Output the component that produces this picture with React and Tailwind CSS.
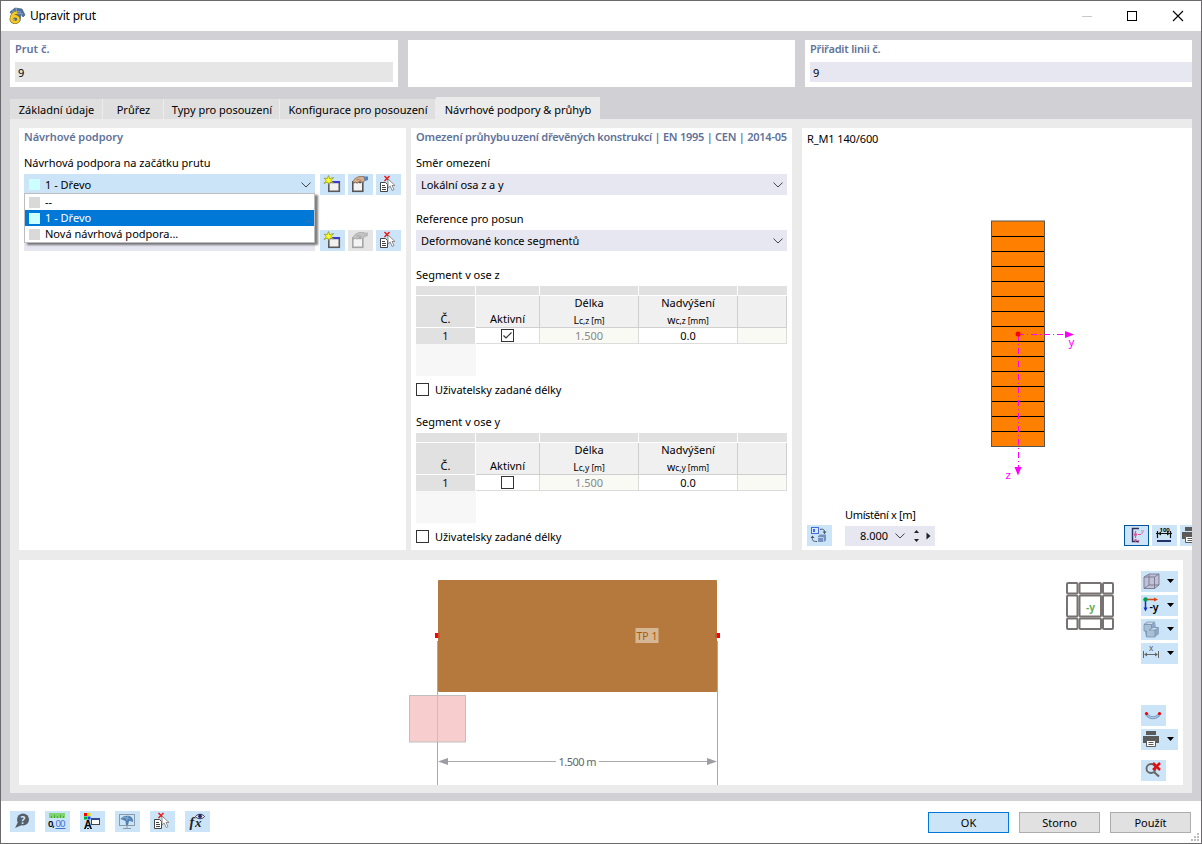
import { Fragment } from "react";

const segments = [
  { axis: "z", checked: true },
  { axis: "y", checked: false },
];

const supportOptions = [
  { text: "--", color: "bg-[#d9d9d9]" },
  { text: "1 - Dřevo", color: "bg-[#ccffff]", selected: true },
  { text: "Nová návrhová podpora...", color: "bg-[#d9d9d9]" },
];

const tabs = [
  { text: "Základní údaje", width: "w-[93px]" },
  { text: "Průřez", width: "w-[61px]" },
  { text: "Typy pro posouzení", width: "w-[116px]" },
  { text: "Konfigurace pro posouzení", width: "w-[156px]" },
];

const Icon = ({ children, w = 25 }) => (
  <svg width={w} height="21" viewBox={`0 0 ${w} 21`} className="block shrink-0">{children}</svg>
);

const ToolButton = ({ children, className = "", drop }) => (
  <button className={`flex h-[21px] shrink-0 items-center overflow-hidden ${drop ? "w-[37px]" : "w-[25px]"} ${className || "bg-[#cce4f7]"}`}>
    <Icon w={drop ? 37 : 25}>
      {children}
      {drop && <path d="M26 8h7l-3.5 4z" fill="#000" />}
    </Icon>
  </button>
);

const Chevron = () => (
  <svg width="10" height="6" viewBox="0 0 10 6" className="block">
    <path d="M.5.6 5 5 9.5.6" fill="none" stroke="#444" />
  </svg>
);

const NewIcon = () => (
  <>
    <rect x="8.800" y="7.800" width="10.500" height="9.500" fill="#f0f0f0" stroke="#5a5a5a" strokeWidth="1.600" />
    <path d="M10 7h10v2.200H10z" fill="#3b3bc8" />
    <path d="M8.500 1.500l1.200 3.200 4-1.200-2.600 2.900 2.400 2.500-3.500-.7-.8 2.800-1.500-3-3.700 1.500 2.300-3-2.200-2.400 3.300.4z" fill="#ffff20" stroke="#8a8a30" strokeWidth=".7" />
  </>
);

const EditIcon = ({ off }) => (
  <>
    <rect x="4.800" y="7.800" width="10" height="9.500" fill="#f4f4f4" stroke={off ? "#a5a5a5" : "#555"} strokeWidth="1.600" />
    <path d="M5 8.500h9" stroke={off ? "#aaa" : "#555"} strokeWidth="1.500" strokeDasharray="2 1" />
    <path d="M5 7.500l2-3 4-2h5l1 4-3 2-2-1-3 1.500-1.500-1-2 1z" fill={off ? "#c4c4c4" : "#d9b08d"} stroke={off ? "#aaa" : "#8b6b55"} strokeWidth=".8" />
    <path d="M8.500 6l3-1M10.500 7.500l3-1.500" stroke={off ? "#999" : "#8b6b55"} strokeWidth=".7" />
    <path d="M15.500 2.500h4.500V6l-3 1z" fill={off ? "#bbb" : "#5784bd"} />
  </>
);

const PickIcon = () => (
  <>
    <path d="M4.500 8.500h5l2 2v7h-7z" fill="#fff" stroke="#444" />
    <path d="M6 11.500h3M6 13.500h4M6 15.500h4" stroke="#444" />
    <path d="M8.500 2l5 5M13.500 2l-5 5" stroke="#f01818" strokeWidth="1.500" />
    <path d="M12 5v9l2.200-2 2 4.500 1.800-.9-2-4.100h3z" fill="#fff" stroke="#777" strokeWidth=".8" />
  </>
);

const PrinterIcon = () => (
  <>
    <path d="M5 2h10v4H5zM2 7h16v7h-3v-2.500H5V14H2z" fill="#5a5a5a" />
    <path d="M5.500 11.500h9v6h-9z" fill="#fff" stroke="#5a5a5a" />
    <path d="M7.500 13.500h5M7.500 15.500h5" stroke="#5a5a5a" />
  </>
);

const SupportRow = ({ off, children }) => (
  <div className="flex h-[21px] gap-[3px]">
    <div className="mr-[2px] w-[291px]">{children}</div>
    <ToolButton><NewIcon /></ToolButton>
    <ToolButton className={off ? "bg-[#e5e5e5]" : ""}><EditIcon off={off} /></ToolButton>
    <ToolButton><PickIcon /></ToolButton>
  </div>
);

const Select = ({ label, value }) => (
  <div className="mb-[16px]">
    <div className="h-[19px] leading-[16px]">{label}</div>
    <div className="flex h-[21px] items-center justify-between bg-[#e7e7f1] pr-[4px] pl-[5px]">
      <span className="tracking-[-0.05px]">{value}</span>
      <Chevron />
    </div>
  </div>
);

const Check = ({ checked }) => (
  <svg width="13" height="13" viewBox="0 0 13 13" className="block shrink-0">
    <rect x=".5" y=".5" width="12" height="12" fill="#fff" stroke="#333" />
    {checked && <path d="M2.500 6.500 5 9 10.500 3.500" fill="none" stroke="#333" strokeWidth="1.200" />}
  </svg>
);

const SegmentTable = ({ axis, checked }) => (
  <div className="h-[147px]">
    <div className="h-[19px] leading-[16px]">Segment v ose {axis}</div>
    <div className="grid h-[58px] grid-cols-[60px_64px_99px_99px_49px] grid-rows-[10px_32px_16px] text-center">
      {[0, 1, 2, 3, 4].map((i) => (
        <div key={i} className={`border-b border-white bg-[#e1e1e1] ${i < 4 ? "border-r" : ""}`} />
      ))}
      <div className="flex items-end justify-center border-r border-b border-white bg-[#e1e1e1] leading-[16px]">Č.</div>
      <div className="flex items-end justify-center border-r border-b border-[#cfcfcf] bg-[#f0f0f0] leading-[16px]">Aktivní</div>
      <div className="border-r border-b border-[#cfcfcf] bg-[#f0f0f0] leading-[14px]">
        <div>Délka</div>
        <div className="pt-[3px] text-[10.5px] leading-[14px]">L<span className="text-[8.5px] tracking-[-0.1px]">c,{axis} [m]</span></div>
      </div>
      <div className="border-r border-b border-[#cfcfcf] bg-[#f0f0f0] leading-[14px]">
        <div>Nadvýšení</div>
        <div className="pt-[3px] text-[10.5px] leading-[14px]">w<span className="text-[8.5px] tracking-[-0.1px]">c,{axis} [mm]</span></div>
      </div>
      <div className="border-r border-b border-[#cfcfcf] bg-[#f0f0f0]" />
      <div className="border-r border-white bg-[#e1e1e1] leading-[15px] text-[#300020]">1</div>
      <div className="flex items-center justify-center border-r border-b border-[#dcdcdc]"><Check checked={checked} /></div>
      <div className="border-r border-b border-[#dcdcdc] bg-[#f9faf4] leading-[16px] text-[#888]">1.500</div>
      <div className="border-r border-b border-[#dcdcdc] leading-[16px]">0.0</div>
      <div className="border-r border-b border-[#dcdcdc] bg-[#f9faf4]" />
    </div>
    <div className="h-[32px] w-[60px] bg-[#f7f7f7]" />
    <div className="mt-[7px] flex items-center gap-[6px]">
      <Check />
      <span className="leading-[13px] tracking-[-0.06px]">Uživatelsky zadané délky</span>
    </div>
  </div>
);

function SectionDrawing() {
  return (
    <svg width="120" height="270" viewBox="985 215 120 270" className="ml-[178px] block">
      <rect x="991.500" y="221" width="53" height="225.500" fill="#ff8000" stroke="#555" />
      {Array.from({ length: 14 }, (_, i) => (
        <path key={i} d={`M992 ${236.500 + i * 15}h52`} stroke="#000" />
      ))}
      <g stroke="#ff00ff" strokeDasharray="6 3 1 3">
        <path d="M1018 334.500h48" />
        <path d="M1018.500 335v133" />
      </g>
      <path d="M1065 331v7l9-3.500zM1014.500 467h7l-3.500 8.500z" fill="#ff00ff" />
      <circle cx="1018" cy="334" r="2.500" fill="#f00" />
      <text x="1068.500" y="346" fontSize="11.500" fill="#ff00ff">y</text>
      <text x="1005.500" y="479" fontSize="11.500" fill="#ff00ff">z</text>
    </svg>
  );
}

function MemberView() {
  return (
    <svg width="1122" height="225" viewBox="19 560 1122 225" className="block">
      <path d="M437.500 641v144M717.500 641v144" stroke="#a8a8b0" />
      <rect x="438" y="580" width="279" height="112" rx="1" fill="#b5793e" />
      <path d="M435 633h4v5h-4zM716 633h4v5h-4z" fill="#f00" />
      <path d="M438 633h2v5h-2zM715 633h2v5h-2z" fill="#c8582f" />
      <rect x="409.500" y="695.500" width="56" height="46.500" fill="#f8cdcd" stroke="#bfbfbf" />
      <path d="M437.500 696v46" stroke="#dfb4b8" />
      <rect x="635.500" y="628" width="23" height="15" fill="#d6b795" />
      <text x="636.500" y="640" fontSize="10.500" fill="#ad5a05" textLength="21">TP 1</text>
      <path d="M447 761.500h109M599 761.500h108" stroke="#a8a8b0" />
      <path d="M438 761.500l10-3.500v7zM717 761.500l-10-3.500v7z" fill="#9d9da3" />
      <text x="558.500" y="766" fontSize="11" fill="#666" textLength="38">1.500 m</text>
      <g fill="none" stroke="#787373" strokeWidth="2">
        {[[1067, 10.5], [1079.5, 21.500], [1103, 10]].map(([x, w]) => (
          <Fragment key={x}>
            <rect x={x} y="583" width={w} height="10.500" rx="1" />
            <rect x={x} y="595.500" width={w} height="21" rx="1" />
            <rect x={x} y="618.500" width={w} height="10.500" rx="1" />
          </Fragment>
        ))}
      </g>
      <text x="1086" y="611" fontSize="10" fontWeight="700" fill="#62ad62" textLength="9">-y</text>
    </svg>
  );
}

function ViewToolbar() {
  return (
    <div className="flex w-[42px] flex-col gap-[3px] pt-[11px]">
      <ToolButton drop>
        <path d="M3 6l5-3h10v11l-4.500 3.500H3z" fill="#c0c0d8" />
        <path d="M3 6h10.500v11.500M13.500 6 18 3M8 3v11h10M8 14l-5 3.500M3 6l5-3h10v11l-4.500 3.500H3z" fill="none" stroke="#77778c" strokeWidth=".9" />
      </ToolButton>
      <ToolButton drop>
        <path d="M4.500 5v9" stroke="#1030d0" strokeWidth="1.500" /><path d="M2.500 12.500h4l-2 4z" fill="#1030d0" />
        <path d="M5 4.500h9" stroke="#d84310" strokeWidth="1.500" /><path d="M13 2.500v4l4-2z" fill="#d84310" />
        <circle cx="4.500" cy="4.500" r="2.200" fill="#00a050" />
        <text x="8.500" y="16" fontSize="10.500" fontWeight="600">-y</text>
      </ToolButton>
      <ToolButton drop>
        <path d="M3 5.500 6 3h8l1 5 3 1v6l-4 3H5l-1-5z" fill="#8ea9c5" />
        <path d="M3 5.500h7.500v4L14 11v7H5.500v-6H3z" fill="#a9bfd6" stroke="#6f8cab" strokeWidth=".7" />
        <path d="M3.500 5 6 3h7.500l-3 2.500zM8 11l4-2.500h5.500L14 11z" fill="#d0dded" stroke="#6f8cab" strokeWidth=".7" />
      </ToolButton>
      <ToolButton drop>
        <path d="M2.500 8v7M17.500 8v7M4 11.500h12" stroke="#666" />
        <path d="M3 11.500l3-2v4zM17 11.500l-3-2v4z" fill="#666" />
        <text x="8" y="8" fontSize="8" fill="#555">x</text>
      </ToolButton>
      <div className="h-[35px]" />
      <ToolButton>
        <path d="M5.500 9c3 5 10 5 13 0" fill="none" stroke="#7c9cc6" strokeWidth="3" />
        <path d="M5.500 9c3 5 10 5 13 0" fill="none" stroke="#bccfe6" />
        <circle cx="5.500" cy="8.500" r="1.600" fill="#e00" /><circle cx="18.500" cy="8.500" r="1.600" fill="#e00" />
      </ToolButton>
      <ToolButton drop><PrinterIcon /></ToolButton>
      <div className="h-[4px]" />
      <ToolButton>
        <circle cx="10" cy="8.500" r="4.500" fill="none" stroke="#666" strokeWidth="1.800" />
        <path d="M13 12l5 4.500" stroke="#666" strokeWidth="2" />
        <path d="M12 3l7 7M19 3l-7 7" stroke="#e01010" strokeWidth="2.500" />
      </ToolButton>
    </div>
  );
}

const Heading = ({ children }) => (
  <h2 className="h-[19px] text-[11px] leading-[17px] font-semibold whitespace-nowrap text-[#5f7299]">{children}</h2>
);

export default function App() {
  return (
    <div className="h-[844px] w-[1202px] overflow-hidden border border-[#6b696b] bg-[#d1d0d5] font-['Noto_Sans','Open_Sans',sans-serif] text-[11px] leading-[16px] text-black">
      {/* Title bar */}
      <header className="flex h-[30px] items-center bg-white pl-[7px]">
        <svg width="18" height="18" viewBox="0 0 18 18">
          <path d="M2 5l5-4 7 1 3 6-2 2-2-3-1 7-4 1L5 9z" fill="#4f719d" stroke="#334f78" strokeWidth=".6" />
          <path d="M4 4l9 1M8 1l1 6M3 6l12 1" stroke="#a9c2df" strokeWidth=".7" />
          <path d="M9 5.500C5 6 3.500 9 3.500 12.500" fill="none" stroke="#7b6a20" strokeWidth="3.600" />
          <ellipse cx="7" cy="12.300" rx="3.600" ry="3" fill="none" stroke="#7b6a20" strokeWidth="3.600" />
          <path d="M9 5.500C5 6 3.500 9 3.500 12.500" fill="none" stroke="#f4cb28" strokeWidth="2.400" />
          <ellipse cx="7" cy="12.300" rx="3.600" ry="3" fill="none" stroke="#f4cb28" strokeWidth="2.400" />
        </svg>
        <span className="ml-[4px] text-[12px] tracking-[-0.2px]">Upravit prut</span>
        <svg width="104" height="12" viewBox="0 0 104 12" className="mr-[16px] ml-auto block">
          <path d="M1 6.500h10" stroke="#c8c8c8" />
          <rect x="46.500" y="1.500" width="9" height="9" fill="none" stroke="#000" />
          <path d="M92 1l10 10M102 1 92 11" stroke="#000" strokeWidth="1.100" />
        </svg>
      </header>

      <div className="flex h-[770px] flex-col px-[9px] pt-[9px]">
        {/* Member number / assigned line */}
        <div className="flex h-[47px] gap-[10px]">
          <div className="w-[388px] bg-white px-[5px]">
            <Heading>Prut č.</Heading>
            <div className="mt-[3px] h-[20px] bg-[#e6e6e6] pl-[3px] leading-[21px]">9</div>
          </div>
          <div className="w-[387px] bg-white" />
          <div className="w-[387px] bg-white pl-[5px]">
            <Heading><span className="tracking-[-0.2px]">Přiřadit linii č.</span></Heading>
            <div className="mt-[3px] h-[20px] bg-[#e7e7f1] pl-[3px] leading-[21px]">9</div>
          </div>
        </div>

        <nav className="mt-[10px] flex h-[22px] items-end">
          {tabs.map((t) => (
            <div key={t.text} className={`h-[20px] border-r border-[#ececec] bg-[#dfdfdf] pl-px text-center leading-[21px] whitespace-nowrap ${t.width}`}>{t.text}</div>
          ))}
          <div className="h-[22px] w-[164px] bg-[#ebebeb] text-center leading-[25px] tracking-[-0.03px] whitespace-nowrap">Návrhové podpory &amp; průhyb</div>
        </nav>

        <main className="h-[674px] w-[1182px] overflow-hidden bg-[#ebebeb] pt-[9px] pl-[9px]">
          <div className="flex h-[422px]">
            {/* Design supports */}
            <section className="w-[387px] bg-white px-[5px]">
              <Heading><span className="tracking-[-0.06px]">Návrhové podpory</span></Heading>
              <div className="mt-[8px] h-[19px] leading-[16px]">Návrhová podpora na začátku prutu</div>
              <SupportRow>
                <div className="relative">
                  <div className="flex h-[21px] items-center bg-[#cce4f7] pr-[4px] pl-[5px]">
                    <div className="h-[11px] w-[11px] bg-[#ccffff]" />
                    <span className="ml-[5px] flex-1">1 - Dřevo</span>
                    <Chevron />
                  </div>
                  <div className="absolute top-[19px] left-0 z-10 w-[291px] border border-[#bdbdbd] bg-white shadow-[3px_2px_2px_rgba(0,0,0,0.5)]">
                    {supportOptions.map((o) => (
                      <div key={o.text} className={`flex h-[16px] items-center pl-[4px] ${o.selected ? "bg-[#0078d7] text-white" : ""}`}>
                        <div className={`h-[11px] w-[11px] ${o.color}`} />
                        <span className="ml-[5px] flex-1">{o.text}</span>
                        {o.selected && <span className="pr-[1px] text-[#50749b]">...</span>}
                      </div>
                    ))}
                  </div>
                </div>
              </SupportRow>
              <div className="h-[35px]" />
              <SupportRow off>
                <div className="h-[21px] bg-[#e7e7f1]" />
              </SupportRow>
            </section>

            {/* Deflection limits */}
            <section className="ml-[5px] w-[381px] bg-white px-[5px]">
              <Heading>
                <span className="inline-block w-[95px] tracking-[-0.15px]">Omezení průhybu</span>
                <span className="tracking-[-0.25px]">uzení dřevěných konstrukcí | EN 1995 | CEN | 2014-05</span>
              </Heading>
              <div className="mt-[8px]">
                <Select label="Směr omezení" value="Lokální osa z a y" />
                <Select label="Reference pro posun" value="Deformované konce segmentů" />
                {segments.map((s) => <SegmentTable key={s.axis} {...s} />)}
              </div>
            </section>

            {/* Cross-section preview */}
            <section className="ml-[10px] w-[390px] overflow-hidden bg-white pl-[5px]">
              <div className="h-[87px] pt-[3px] tracking-[-0.12px]">R_M1 140/600</div>
              <SectionDrawing />
              <div className="mt-[22px] ml-[38px] h-[18px] tracking-[-0.35px]">Umístění x [m]</div>
              <div className="flex h-[21px] w-[402px] items-center">
                <ToolButton>
                  <rect x="4.500" y="2.500" width="7" height="6" fill="#dbe8ff" stroke="#416be0" />
                  <path d="M6 4h2v3H6z" fill="#416be0" />
                  <path d="M13 4.500c3-1 5 0 4.500 4M10 16.500c-4 0-5-1-4.500-4" fill="none" stroke="#4b5565" />
                  <path d="M15.500 6.500h4l-2 2.500zM3.500 13h4l-2-2.500z" fill="#4b5565" />
                  <path d="M11 11l2-1.500h6v6L17 17h-6z" fill="#7593bc" />
                  <path d="M11 12.500h5.500v4.500" fill="none" stroke="#b5cbe4" />
                </ToolButton>
                <div className="ml-[13px] flex h-[20px] w-[90px] items-center bg-[#e7e7f1] pl-[15px]">
                  <span className="mr-[8px] w-[27px]">8.000</span>
                  <Chevron />
                  <svg width="24" height="14" viewBox="0 0 24 14" className="ml-[6px]">
                    <path d="M3 4l2.500-3L8 4zM3 10l2.500 3L8 10zM15.500 3.500v7l4-3.500z" fill="#222" />
                  </svg>
                </div>
                <div className="ml-[189px] flex gap-[3px]">
                  <ToolButton className="bg-[#cce4f7] ring-1 ring-[#00559c] ring-inset">
                    <path d="M15 3.500H8.500v13H15" fill="none" stroke="#303060" strokeWidth="1.500" />
                    <path d="M11.500 6v10M10 9.500h8" stroke="#d8569a" strokeWidth="1.200" strokeDasharray="3 1" />
                    <circle cx="11.500" cy="9.500" r="1.600" fill="#e0569a" />
                    <path d="M9.800 14.500h3.400l-1.700 3z" fill="#d8569a" />
                    <text x="17" y="8" fontSize="6" fill="#d8569a">y</text>
                    <text x="13" y="18" fontSize="6" fill="#d8569a">z</text>
                  </ToolButton>
                  <ToolButton>
                    <path d="M5.500 6v7M18.500 6v7M4 8.500h16" stroke="#111" strokeWidth="1.200" />
                    <path d="M6 8.500l3-2v4zM18 8.500l-3-2v4z" fill="#111" />
                    <path d="M5 15h14v2H5z" fill="#25306a" />
                    <text x="7.500" y="6.500" fontSize="6" fontWeight="700">100</text>
                  </ToolButton>
                  <ToolButton><PrinterIcon /></ToolButton>
                </div>
              </div>
            </section>
          </div>

          <section className="mt-[10px] flex h-[225px] w-[1164px] bg-white">
            <MemberView />
            <ViewToolbar />
          </section>
        </main>
      </div>

      <footer className="flex h-[42px] items-start gap-[10px] bg-white pt-[10px] pl-[9px]">
        <ToolButton>
          <circle cx="13" cy="8.500" r="6" fill="#555f6c" /><path d="M8 11l-3 6 7-3z" fill="#555f6c" />
          <text x="10.500" y="12.500" fontSize="10" fontWeight="700" fill="#dbeaf6">?</text>
        </ToolButton>
        <ToolButton>
          <path d="M4 2h16v5H4z" fill="#7fd66f" /><path d="M6.500 5v2M9.500 4v3M12.500 5v2M15.500 4v3M18.500 5v2" stroke="#3c9b34" strokeWidth=".8" />
          <text x="3" y="15.500" fontSize="9.500" fontWeight="600" textLength="7">0,</text>
          <text x="10.500" y="15.500" fontSize="9.500" fill="#3f70d3" textLength="10">00</text><path d="M10.500 17.500h10" stroke="#3f70d3" />
        </ToolButton>
        <ToolButton>
          <path d="M4 2h3v3H4z" fill="#f00" /><path d="M7.500 2h3v3h-3z" fill="#e8df00" /><path d="M4 5.500h3v3H4z" fill="#00aa35" /><path d="M7.500 5.500h3v3h-3z" fill="#1640ef" />
          <text x="4.500" y="17" fontSize="10" fontWeight="700">A</text><path d="M4 17.500h8" stroke="#222" strokeDasharray="2 1" />
          <rect x="11.500" y="8.500" width="8" height="5" fill="#fff" stroke="#444" /><path d="M11 7h9v2h-9z" fill="#334a99" />
        </ToolButton>
        <ToolButton>
          <rect x="4.500" y="3.500" width="15" height="11" fill="none" stroke="#8c9aa6" /><path d="M12 14v3M8 17.500h8" stroke="#8c9aa6" />
          <path d="M5.500 8c2-3 6-4 9-3 3 1 4 4 3.500 6-2-1-3-1-4-1l-1 4h-2l-.5-4C9 9 7 9 5.500 8z" fill="#4f81b2" />
          <path d="M7 7.500c3-2 7-1 9 2M10 5.500l2 4M13 5l-1 4" fill="none" stroke="#9dbbd6" strokeWidth=".6" />
        </ToolButton>
        <ToolButton><PickIcon /></ToolButton>
        <ToolButton>
          <text x="4.500" y="15.500" fontSize="14" fontStyle="italic" fontWeight="700" fontFamily="Liberation Serif" fill="#222">f</text>
          <text x="10" y="15.500" fontSize="13" fontStyle="italic" fontWeight="700" fontFamily="Liberation Serif" fill="#222">x</text>
          <path d="M10.500 5.500c2-3 7-3 9 0-2 3-7 3-9 0z" fill="#e7e7f5" stroke="#272759" /><circle cx="15" cy="5.200" r="1.900" fill="#272759" />
        </ToolButton>
        <div className="mt-[1px] ml-auto flex gap-[10px]">
          <button className="h-[21px] w-[81px] border border-[#0078d7] bg-[#cce4f7]">OK</button>
          <button className="h-[21px] w-[81px] border border-[#adadad] bg-[#e1e1e1]">Storno</button>
          <button className="h-[21px] w-[81px] border border-[#adadad] bg-[#e1e1e1]">Použít</button>
        </div>
        <svg width="10" height="10" viewBox="0 0 10 10" className="-ml-[10px] self-end">
          <path d="M6 0h2v2H6zM3 3h2v2H3zM6 3h2v2H6zM0 6h2v2H0zM3 6h2v2H3zM6 6h2v2H6z" fill="#bcbcbc" />
        </svg>
      </footer>
    </div>
  );
}
